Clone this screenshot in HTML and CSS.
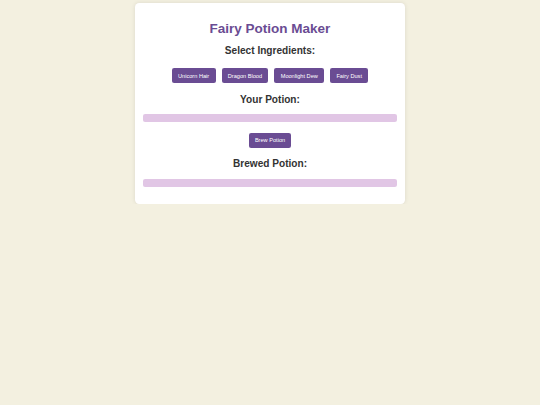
FILE: index.html
```html
<!DOCTYPE html>
<html lang="en">
<head>
<meta charset="utf-8">
<title>Fairy Potion Maker</title>
<link rel="stylesheet" href="styles.css">
</head>
<body>
<main class="card">
  <h1 class="title">Fairy Potion Maker</h1>
  <h2 class="heading">Select Ingredients:</h2>
  <div class="ingredients">
    <button class="btn">Unicorn Hair</button>
    <button class="btn">Dragon Blood</button>
    <button class="btn">Moonlight Dew</button>
    <button class="btn">Fairy Dust</button>
  </div>
  <h2 class="heading">Your Potion:</h2>
  <div class="bar"></div>
  <div class="brew-row">
    <button class="btn">Brew Potion</button>
  </div>
  <h2 class="heading">Brewed Potion:</h2>
  <div class="bar"></div>
</main>
</body>
</html>
```

FILE: styles.css
```css
html, body {
  margin: 0;
  padding: 0;
}

body {
  background: #f3f0e0;
  font-family: "Liberation Sans", Arial, Helvetica, sans-serif;
  padding-top: 3.4px;
}

.card {
  box-sizing: border-box;
  width: 270px;
  margin: 0 auto;
  padding: 8.4px;
  background: #ffffff;
  border-radius: 4.2px;
  box-shadow: 0 0 4px rgba(0, 0, 0, 0.1);
  text-align: center;
}

.title {
  margin: 9px 0;
  font-size: 13.5px;
  line-height: 15.5px;
  font-weight: bold;
  color: #6a4c93;
}

.heading {
  margin: 8.4px 0;
  font-size: 10.1px;
  line-height: 12.2px;
  font-weight: bold;
  color: #333333;
}

.ingredients {
  display: flex;
  justify-content: center;
  gap: 6px;
  padding: 2.6px 0 2.5px;
}

.btn {
  margin: 0;
  padding: 4.2px 6.3px;
  border: none;
  border-radius: 2.1px;
  background: #6a4c93;
  color: #ffffff;
  font-family: "Liberation Sans", Arial, Helvetica, sans-serif;
  font-size: 5.625px;
  line-height: 6.1px;
}

.bar {
  height: 8px;
  margin: 8.4px 0;
  border-radius: 2.1px;
  background: #e1c6e5;
}

.brew-row {
  display: flex;
  justify-content: center;
  padding: 2.4px 0;
}
```
